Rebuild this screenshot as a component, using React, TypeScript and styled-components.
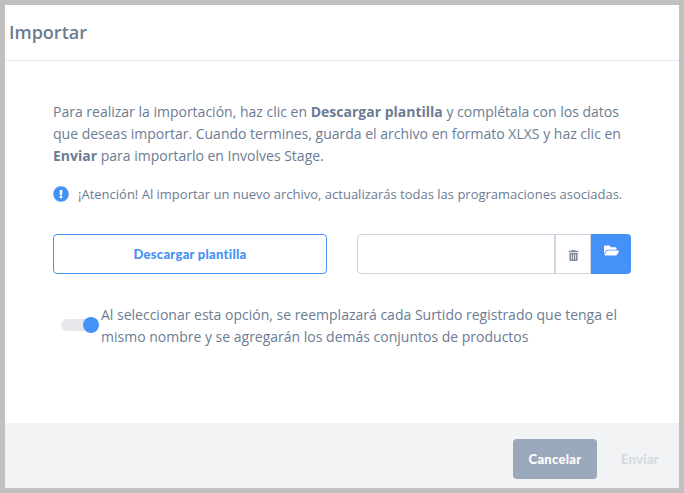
import React from "react";
import styled, { createGlobalStyle } from "styled-components";
import { FaExclamationCircle, FaFolderOpen, FaTrashAlt } from "react-icons/fa";

const GlobalStyle = createGlobalStyle`
  html, body {
    margin: 0;
    padding: 0;
    height: 100%;
    background: #c0c0c0;
  }
  #root {
    height: 100%;
  }
`;

const Frame = styled.div`
  box-sizing: border-box;
  height: 493px;
  padding: 5px;
  font-family: "Open Sans", sans-serif;
  color: #6b7c93;
`;

const Dialog = styled.div`
  display: flex;
  flex-direction: column;
  height: 483px;
  background: #fff;
`;

const Header = styled.div`
  box-sizing: border-box;
  display: flex;
  align-items: center;
  height: 56px;
  padding: 0 0 2px 4px;
  border-bottom: 1px solid #e6e8eb;
`;

const Title = styled.h1`
  margin: 0;
  font-size: 18px;
  font-weight: 600;
  color: #6b7c93;
`;

const Content = styled.div`
  flex: 1;
  padding: 40px 48px 0;
`;

const Intro = styled.p`
  margin: 0;
  font-size: 14px;
  line-height: 22px;
  width: 590px;
`;

const Notice = styled.div`
  display: flex;
  align-items: center;
  gap: 9px;
  margin-top: 18px;
  font-size: 13px;
  line-height: 18px;
  white-space: nowrap;
`;

const NoticeIcon = styled(FaExclamationCircle)`
  flex: none;
  width: 16px;
  height: 16px;
  color: #4492f7;
`;

const Actions = styled.div`
  display: flex;
  gap: 30px;
  margin-top: 31px;
`;

const DownloadButton = styled.button`
  box-sizing: border-box;
  width: 274px;
  height: 40px;
  padding: 0;
  background: #fff;
  border: 1px solid #4492f7;
  border-radius: 4px;
  color: #4492f7;
  font-family: "Lato", sans-serif;
  font-size: 13px;
  font-weight: 900;
  letter-spacing: 0.27px;
`;

const FilePicker = styled.div`
  display: flex;
  height: 40px;
`;

const FileName = styled.div`
  box-sizing: border-box;
  width: 198px;
  border: 1px solid #ccd5e0;
  border-radius: 4px 0 0 4px;
`;

const TrashButton = styled.button`
  box-sizing: border-box;
  display: flex;
  align-items: center;
  justify-content: center;
  width: 36px;
  padding: 3px 0 0;
  background: #fff;
  border: 1px solid #ccd5e0;
  color: #848c97;
`;

const FolderButton = styled.button`
  box-sizing: border-box;
  display: flex;
  justify-content: center;
  width: 40px;
  padding: 9px 0 0;
  background: #4492f7;
  border: none;
  border-radius: 0 4px 4px 0;
  color: #fff;
`;

const ReplaceRow = styled.div`
  display: flex;
  margin-top: 30px;
  padding-left: 8px;
`;

const Toggle = styled.div`
  position: relative;
  flex: none;
  width: 40px;
  height: 12px;
  margin-top: 15px;
`;

const ToggleTrack = styled.div`
  width: 32px;
  height: 12px;
  border-radius: 6px;
  background: #e6e8eb;
`;

const ToggleThumb = styled.div`
  position: absolute;
  top: -2px;
  left: 22px;
  width: 16px;
  height: 16px;
  border-radius: 50%;
  background: #4492f7;
`;

const ReplaceText = styled.div`
  font-size: 14px;
  line-height: 22px;
  width: 530px;
`;

const Footer = styled.div`
  box-sizing: border-box;
  display: flex;
  align-items: center;
  justify-content: flex-end;
  gap: 12px;
  height: 65px;
  padding: 7px 8px 0 0;
  background: #f2f3f5;
`;

const CancelButton = styled.button`
  box-sizing: border-box;
  width: 84px;
  height: 40px;
  padding: 0;
  background: #9aa8bc;
  border: none;
  border-radius: 4px;
  color: #fff;
  font-family: "Lato", sans-serif;
  font-size: 13px;
  font-weight: 900;
  letter-spacing: 0.27px;
`;

const SendButton = styled.button`
  box-sizing: border-box;
  width: 62px;
  height: 40px;
  padding: 0;
  background: transparent;
  border: none;
  color: #d3dae4;
  font-family: "Lato", sans-serif;
  font-size: 13px;
  font-weight: 900;
  letter-spacing: 0.27px;
`;

function App() {
  return (
    <Frame>
      <GlobalStyle />
      <Dialog>
        <Header>
          <Title>Importar</Title>
        </Header>
        <Content>
          <Intro>
            Para realizar la importación, haz clic en <b>Descargar plantilla</b> y complétala con los
            datos que deseas importar. Cuando termines, guarda el archivo en formato XLXS y haz clic
            en <b>Enviar</b> para importarlo en Involves Stage.
          </Intro>
          <Notice>
            <NoticeIcon />
            ¡Atención! Al importar un nuevo archivo, actualizarás todas las programaciones asociadas.
          </Notice>
          <Actions>
            <DownloadButton>Descargar plantilla</DownloadButton>
            <FilePicker>
              <FileName />
              <TrashButton>
                <FaTrashAlt size={11} />
              </TrashButton>
              <FolderButton>
                <FaFolderOpen size={15} />
              </FolderButton>
            </FilePicker>
          </Actions>
          <ReplaceRow>
            <Toggle>
              <ToggleTrack />
              <ToggleThumb />
            </Toggle>
            <ReplaceText>
              Al seleccionar esta opción, se reemplazará cada Surtido registrado que tenga el mismo
              nombre y se agregarán los demás conjuntos de productos
            </ReplaceText>
          </ReplaceRow>
        </Content>
        <Footer>
          <CancelButton>Cancelar</CancelButton>
          <SendButton>Enviar</SendButton>
        </Footer>
      </Dialog>
    </Frame>
  );
}

export default App;
